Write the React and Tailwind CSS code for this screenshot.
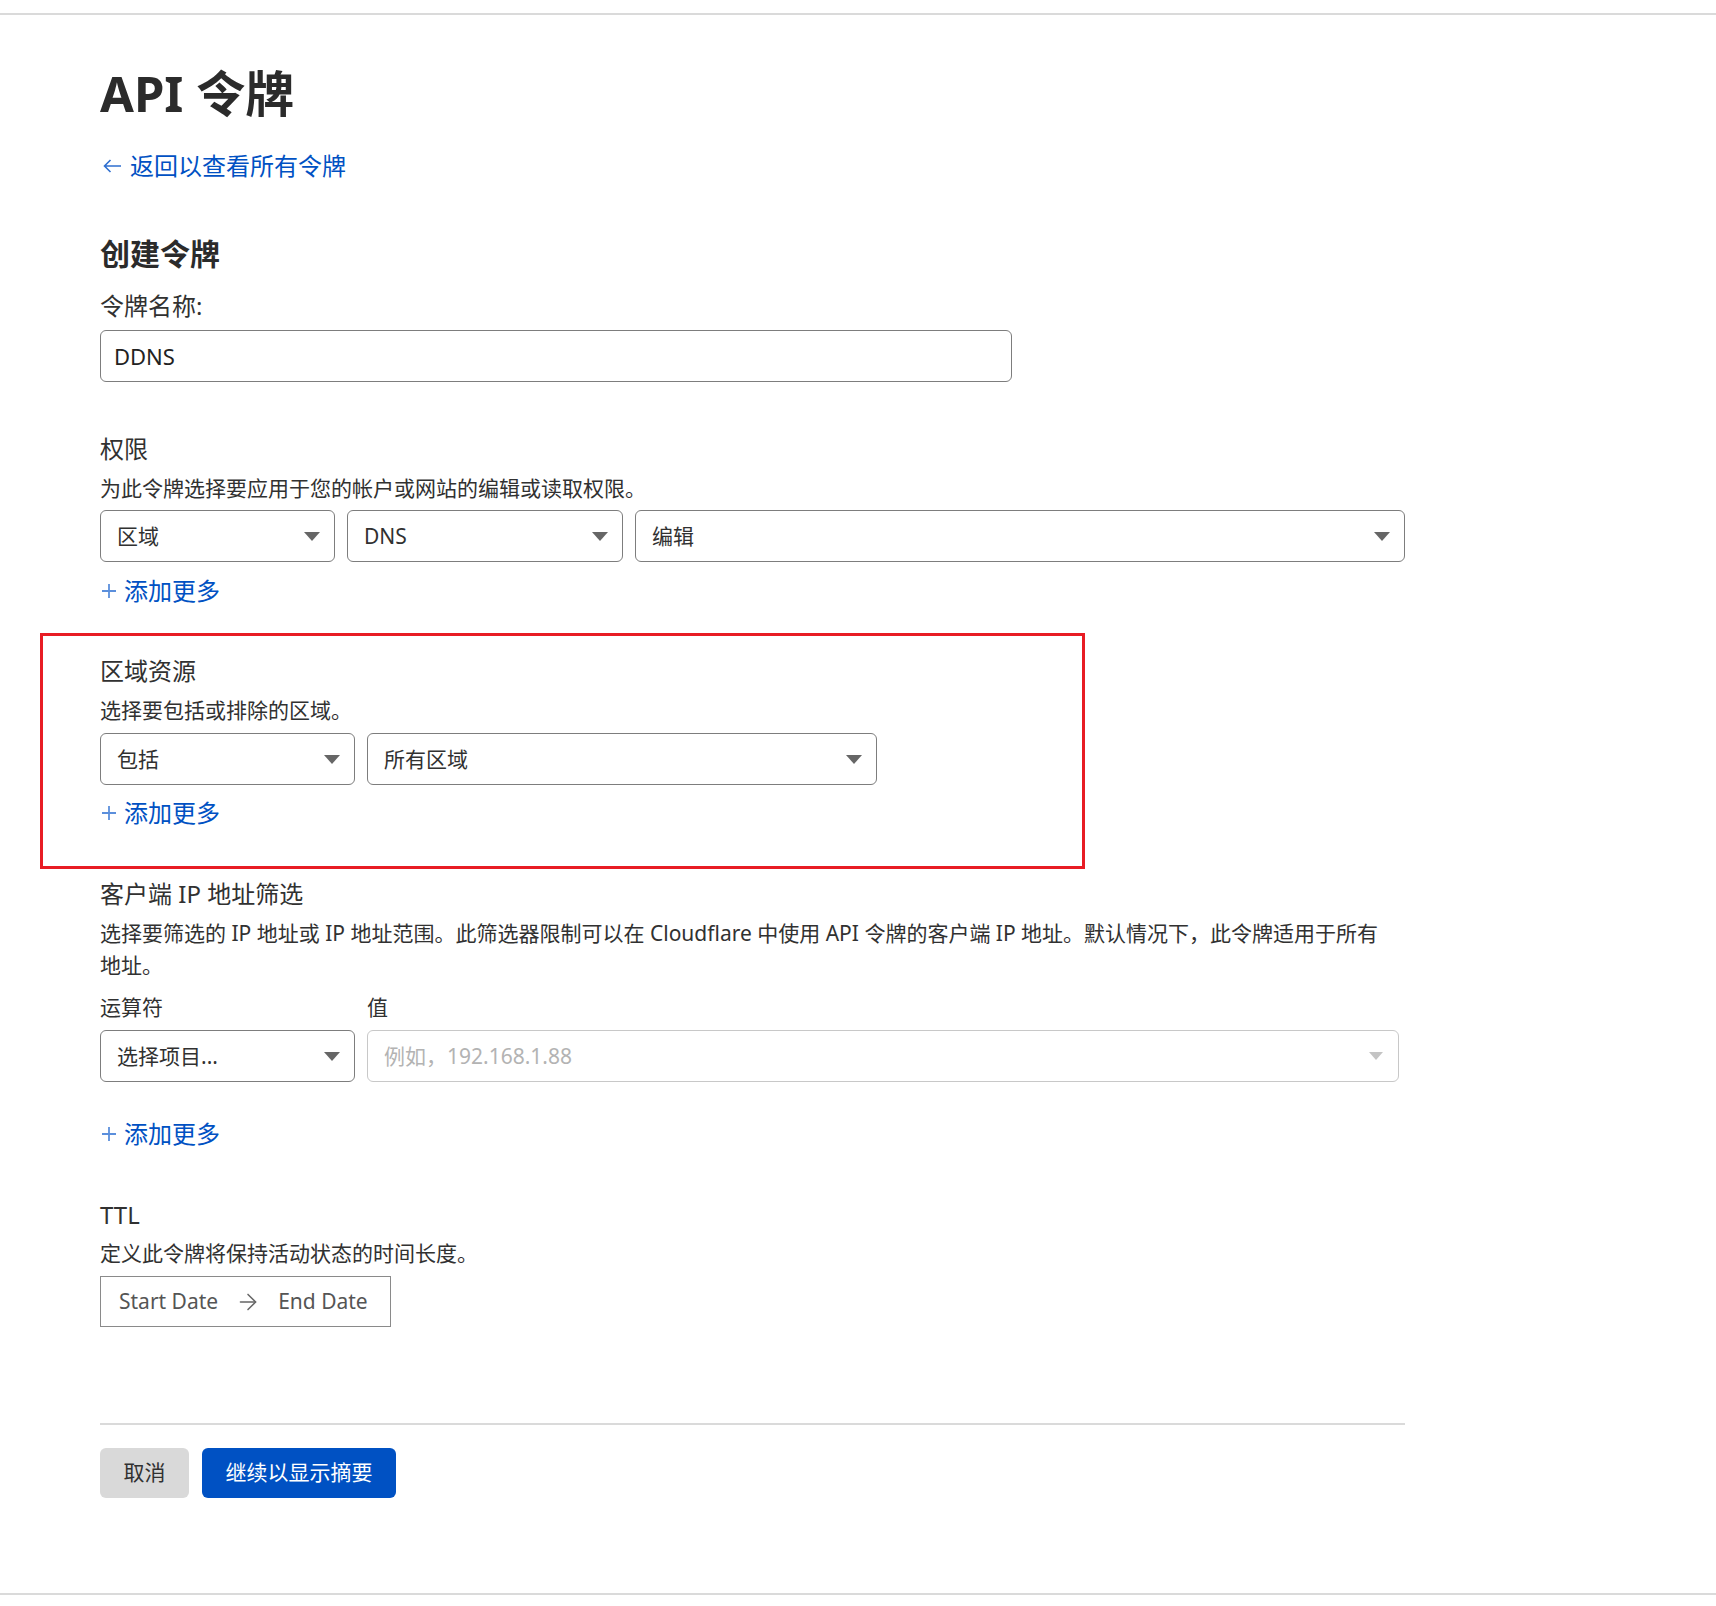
import React from "react";
import { ArrowRight } from "lucide-react";

const FONT = { fontFamily: '"Noto Sans", "Noto Sans CJK SC", sans-serif' };

function Tri({ disabled }) {
  return disabled ? (
    <svg width="14" height="8" viewBox="0 0 14 8"><path d="M0 0 L14 0 L7 8 Z" fill="#c4c4c4" /></svg>
  ) : (
    <svg width="16" height="9" viewBox="0 0 16 9"><path d="M0 0 L16 0 L8 9 Z" fill="#666666" /></svg>
  );
}

function Select({ w, children, disabled }) {
  return (
    <div
      className={
        "flex h-[52px] items-center justify-between rounded-[6px] border pl-4 text-[21px] " +
        (disabled ? "border-[#c8c8c8] pr-[15px] text-[#b3b3b3]" : "border-[#7d7d7d] pr-[14px] text-[#313131]")
      }
      style={{ width: w }}
    >
      <span className="leading-none">{children}</span>
      <Tri disabled={disabled} />
    </div>
  );
}

function AddMore({ className = "" }) {
  return (
    <div className={"flex h-[32px] items-center text-[24px] leading-[32px] " + className}>
      <svg width="14" height="14" viewBox="0 0 14 14" className="ml-[2px] mr-[8px]">
        <path d="M7 0 V14 M0 7 H14" stroke="#5b8fdc" strokeWidth="1.8" />
      </svg>
      <span className="text-[#0051c3]">添加更多</span>
    </div>
  );
}

export default function App() {
  return (
    <div className="min-h-[1606px] bg-white text-[#313131]" style={FONT}>
      <div className="h-[13px]" />
      <div className="h-[2px] bg-[#dadada]" />
      <div className="pl-[100px]">
        <div className="w-[1305px]">
          <h1 className="mt-[48px] h-[60px] text-[49px] font-bold leading-[60px] text-[#2b2b2b]">API 令牌</h1>
          <div className="mt-[25px] flex h-[36px] items-center text-[24px] leading-[36px] text-[#0051c3]">
            <svg width="19" height="14" viewBox="0 0 19 14" className="ml-[3px] mr-[8px]">
              <path d="M18 7 H1.5 M7.5 1 L1.5 7 L7.5 13" fill="none" stroke="#2f6fd0" strokeWidth="1.6" />
            </svg>
            <span>返回以查看所有令牌</span>
          </div>
          <h2 className="mt-[50px] h-[40px] text-[30px] font-bold leading-[40px] text-[#2b2b2b]">创建令牌</h2>
          <div className="mt-[16px] h-[32px] text-[24px] leading-[32px]">令牌名称:</div>
          <div className="mt-[8px] flex h-[52px] w-[912px] items-center rounded-[6px] border border-[#7d7d7d] pl-[13px] text-[22px] text-[#222]">
            DDNS
          </div>

          <div className="mt-[51px] h-[32px] text-[24px] leading-[32px]">权限</div>
          <div className="mt-[8px] h-[30px] text-[21px] leading-[30px]">为此令牌选择要应用于您的帐户或网站的编辑或读取权限。</div>
          <div className="mt-[7px] flex gap-[12px]">
            <Select w={235}>区域</Select>
            <Select w={276}>DNS</Select>
            <Select w={770}>编辑</Select>
          </div>
          <AddMore className="mt-[13px]" />

          <div className="ml-[-60px] mt-[26px] w-[1045px] border-[3px] border-[#e81c24] pb-[37px] pl-[57px] pt-[19px]">
            <div className="h-[32px] text-[24px] leading-[32px]">区域资源</div>
            <div className="mt-[8px] h-[30px] text-[21px] leading-[30px]">选择要包括或排除的区域。</div>
            <div className="mt-[8px] flex gap-[12px]">
              <Select w={255}>包括</Select>
              <Select w={510}>所有区域</Select>
            </div>
            <AddMore className="mt-[12px]" />
          </div>

          <div className="mt-[9px] h-[32px] text-[24px] leading-[32px]">客户端 IP 地址筛选</div>
          <div className="mt-[7px] text-[21px] leading-[32px]">
            选择要筛选的 IP 地址或 IP 地址范围。此筛选器限制可以在 Cloudflare 中使用 API 令牌的客户端 IP 地址。默认情况下，此令牌适用于所有
            <br />
            地址。
          </div>
          <div className="mt-[10px] flex h-[32px] gap-[12px] text-[21px] leading-[32px]">
            <div className="w-[255px]">运算符</div>
            <div>值</div>
          </div>
          <div className="mt-[7px] flex gap-[12px]">
            <Select w={255}>选择项目...</Select>
            <Select w={1032} disabled>例如，192.168.1.88</Select>
          </div>
          <AddMore className="mt-[36px]" />

          <div className="mt-[49px] h-[32px] text-[24px] leading-[32px]">TTL</div>
          <div className="mt-[7px] h-[30px] text-[21px] leading-[30px]">定义此令牌将保持活动状态的时间长度。</div>
          <div className="mt-[8px] flex h-[51px] w-[291px] items-center border border-[#8a8a8a] pl-[18px] text-[21px] text-[#555]">
            <span>Start Date</span>
            <ArrowRight size={26} strokeWidth={1.4} className="mx-[17px] text-[#666]" />
            <span>End Date</span>
          </div>

          <div className="mt-[96px] h-[2px] bg-[#dadada]" />
          <div className="mt-[23px] flex gap-[13px]">
            <button className="h-[50px] w-[89px] rounded-[6px] bg-[#d9d9d9] text-[21px] text-[#313131]">取消</button>
            <button className="h-[50px] w-[194px] rounded-[6px] bg-[#0051c3] text-[21px] text-white">继续以显示摘要</button>
          </div>
        </div>
      </div>
      <div className="mt-[95px] h-[2px] bg-[#dadada]" />
    </div>
  );
}
